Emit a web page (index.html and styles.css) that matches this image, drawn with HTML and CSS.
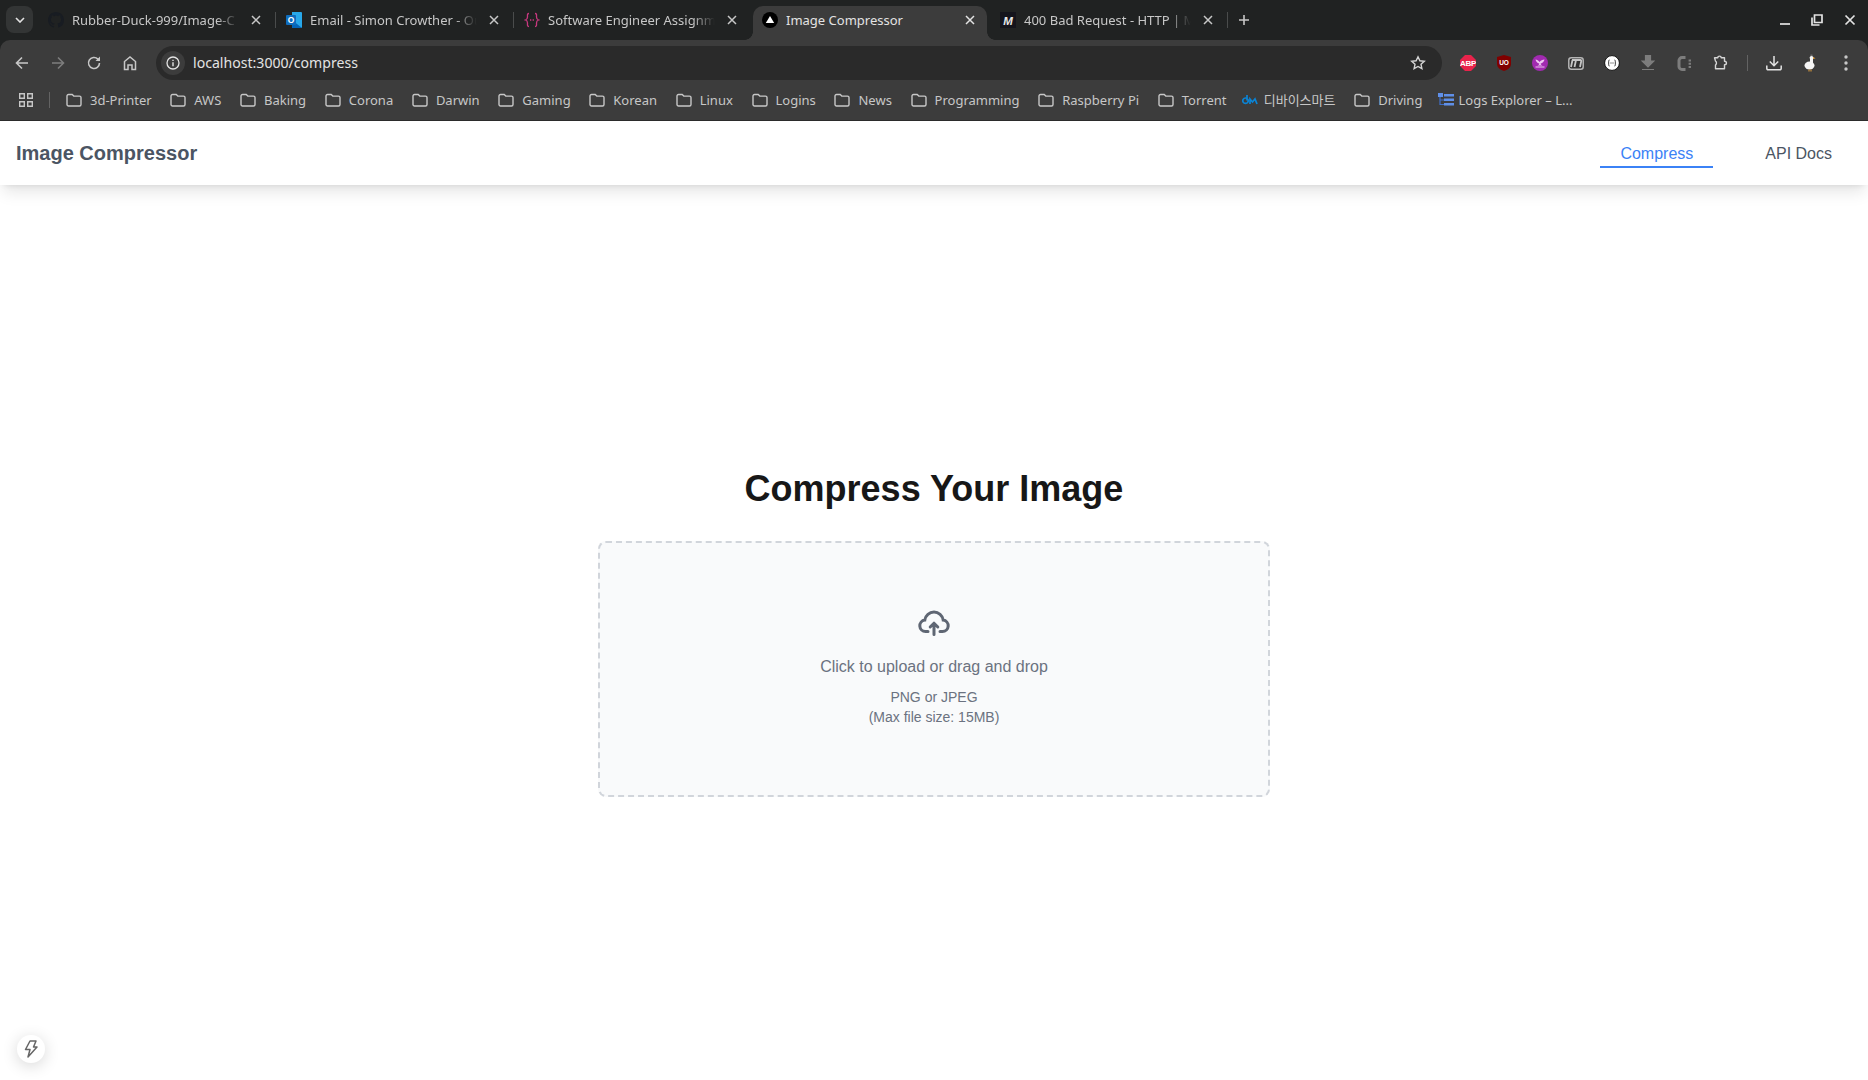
FILE: index.html
```html
<!DOCTYPE html>
<html>
<head>
    <meta charset="utf-8">
    <title>Image Compressor</title>
    <link rel="stylesheet" href="styles.css">
</head>
<body>
    <svg class="defs" width="0" height="0">
        <symbol id="folder" viewBox="0 0 16 14">
            <path d="M1 3a1.500 1.500 0 0 1 1.500-1.500h3.700l1.600 1.600h5.700A1.500 1.500 0 0 1 15 4.600v6.900A1.500 1.500 0 0 1 13.500 13h-11A1.500 1.500 0 0 1 1 11.500z" fill="none" stroke="#c7c7c7" stroke-width="1.400"/>
        </symbol>
        <symbol id="close" viewBox="0 0 10 10">
            <path d="M1 1l8 8M9 1l-8 8" fill="none" stroke="currentColor" stroke-width="1.500"/>
        </symbol>
    </svg>

    <div class="browser">
        <div class="tabstrip">
            <div class="tab-search">
                <svg width="10" height="6" viewBox="0 0 10 6"><path d="M1 1l4 4 4-4" fill="none" stroke="#e3e3e3" stroke-width="1.600"/></svg>
            </div>

            <div class="tab">
                <svg class="favicon" viewBox="0 0 16 16"><path fill="#181c22" d="M8 0C3.580 0 0 3.580 0 8c0 3.540 2.290 6.530 5.470 7.590.4.070.55-.17.55-.38 0-.19-.01-.82-.01-1.490-2.010.37-2.530-.49-2.690-.94-.09-.23-.48-.94-.82-1.130-.28-.15-.68-.52-.01-.53.63-.01 1.080.58 1.230.82.72 1.210 1.870.87 2.330.66.07-.52.28-.87.51-1.070-1.780-.2-3.640-.89-3.640-3.950 0-.87.31-1.590.82-2.150-.08-.2-.36-1.020.08-2.120 0 0 .67-.21 2.200.82.64-.18 1.320-.27 2-.27.68 0 1.360.09 2 .27 1.530-1.040 2.200-.82 2.200-.82.44 1.100.16 1.920.08 2.120.51.56.82 1.270.82 2.150 0 3.070-1.870 3.750-3.650 3.950.29.25.54.73.54 1.480 0 1.070-.01 1.930-.01 2.200 0 .21.15.46.55.38A8.013 8.013 0 0 0 16 8c0-4.420-3.580-8-8-8z"/></svg>
                <span class="tab-title">Rubber-Duck-999/Image-C</span>
                <span class="tab-close"><svg width="10" height="10"><use href="#close"/></svg></span>
                <span class="tab-sep"></span>
            </div>

            <div class="tab">
                <svg class="favicon" viewBox="0 0 16 16">
                    <path fill="#28a8ea" d="M6 0h9a1 1 0 0 1 1 1v14a1 1 0 0 1-1 1H6z"/>
                    <path fill="#0364b8" d="M6 8l10 8H6z"/>
                    <rect x="0" y="3" width="10" height="10" rx="1" fill="#0f6cbd"/>
                    <text class="favicon-letter" x="5" y="11" font-size="8.500" fill="#fff" text-anchor="middle">O</text>
                </svg>
                <span class="tab-title">Email - Simon Crowther - Ou</span>
                <span class="tab-close"><svg width="10" height="10"><use href="#close"/></svg></span>
                <span class="tab-sep"></span>
            </div>

            <div class="tab">
                <svg class="favicon" viewBox="0 0 16 16"><path d="M5 1.500C3 1.500 3.500 3 3.500 5S3 7.500 1.500 8C3 8.500 3.500 9 3.500 11s-.5 3.500 1.500 3.500M11 1.500c2 0 1.500 1.500 1.500 3.500s.5 2.500 2 3c-1.500.5-2 1-2 3s.5 3.500-1.500 3.500" fill="none" stroke="#c8387f" stroke-width="1.300"/><path d="M6 8h4.500" stroke="#c8387f" stroke-width="1.300" stroke-dasharray="1.300 1.300"/></svg>
                <span class="tab-title">Software Engineer Assignm</span>
                <span class="tab-close"><svg width="10" height="10"><use href="#close"/></svg></span>
            </div>

            <div class="tab tab-active">
                <svg class="favicon" viewBox="0 0 16 16"><circle cx="8" cy="8" r="8" fill="#000"/><path d="M8 4l4.200 7H3.800z" fill="#fff"/></svg>
                <span class="tab-title no-fade">Image Compressor</span>
                <span class="tab-close"><svg width="10" height="10"><use href="#close"/></svg></span>
            </div>

            <div class="tab">
                <svg class="favicon" viewBox="0 0 16 16"><rect width="16" height="16" fill="#14141c"/><text class="favicon-letter italic" x="8" y="12.500" font-size="11.500" fill="#e8e8e8" text-anchor="middle">M</text></svg>
                <span class="tab-title">400 Bad Request - HTTP | M</span>
                <span class="tab-close"><svg width="10" height="10"><use href="#close"/></svg></span>
                <span class="tab-sep"></span>
            </div>

            <svg class="tab-new" width="12" height="12" viewBox="0 0 12 12"><path d="M6 1v10M1 6h10" stroke="#c7c7c7" stroke-width="1.600"/></svg>

            <div class="window-controls">
                <svg width="12" height="12" viewBox="0 0 12 12"><path d="M2 10h10" stroke="#e3e3e3" stroke-width="1.700"/></svg>
                <svg width="12" height="12" viewBox="0 0 12 12"><path d="M3.500 1h7.500v7.500H3.500z" fill="none" stroke="#e3e3e3" stroke-width="1.700"/><path d="M1 3.500V11h7.500" fill="none" stroke="#e3e3e3" stroke-width="1.700"/></svg>
                <svg width="12" height="12" viewBox="0 0 12 12"><path d="M1.500 1.500l9 9M10.500 1.500l-9 9" stroke="#e3e3e3" stroke-width="1.700"/></svg>
            </div>
        </div>

        <div class="toolbar">
            <span class="tool"><svg width="16" height="16" viewBox="0 0 16 16"><path d="M14 8H3M8 2.500L2.500 8 8 13.500" fill="none" stroke="#c7c7c7" stroke-width="1.600"/></svg></span>
            <span class="tool"><svg width="16" height="16" viewBox="0 0 16 16"><path d="M2 8h11M8 2.500L13.500 8 8 13.500" fill="none" stroke="#7d7d7d" stroke-width="1.600"/></svg></span>
            <span class="tool"><svg width="16" height="16" viewBox="0 0 16 16"><path d="M13.500 8a5.500 5.500 0 1 1-1.600-3.900L13.500 5.700" fill="none" stroke="#c7c7c7" stroke-width="1.600"/><path d="M14 1.500V6H9.500z" fill="#c7c7c7"/></svg></span>
            <span class="tool"><svg width="16" height="16" viewBox="0 0 16 16"><path d="M2.500 14.500V6.500L8 2l5.500 4.500v8h-3.500V10H6v4.500z" fill="none" stroke="#c7c7c7" stroke-width="1.500"/></svg></span>

            <div class="omnibox">
                <span class="omni-info"><svg width="14" height="14" viewBox="0 0 14 14"><circle cx="7" cy="7" r="6" fill="none" stroke="#e3e3e3" stroke-width="1.300"/><path d="M7 6.200V10.200M7 3.800v1.300" stroke="#e3e3e3" stroke-width="1.400"/></svg></span>
                <span class="omni-url">localhost:3000/compress</span>
                <svg class="omni-star" width="16" height="16" viewBox="0 0 16 16"><path d="M8 1.800l1.900 4 4.400.5-3.300 3 .9 4.400L8 11.500l-3.900 2.200.9-4.400-3.300-3 4.400-.5z" fill="none" stroke="#d5d5d5" stroke-width="1.400"/></svg>
            </div>

            <span class="tool ext-first"><svg width="16" height="16" viewBox="0 0 16 16"><path d="M5 0h6l5 5v6l-5 5H5l-5-5V5z" fill="#e8234b"/><text class="ext-text" x="8" y="11" font-size="8" letter-spacing="-.3" fill="#fff" text-anchor="middle">ABP</text></svg></span>
            <span class="tool"><svg width="16" height="16" viewBox="0 0 16 16"><path d="M8 0l7 2v7c0 3.500-3.500 6-7 7-3.500-1-7-3.500-7-7V2z" fill="#800000"/><text class="ext-text" x="8" y="10" font-size="6.500" fill="#fff" text-anchor="middle">UO</text></svg></span>
            <span class="tool"><svg width="16" height="16" viewBox="0 0 16 16"><circle cx="8" cy="8" r="8" fill="#a12ab0"/><path d="M3.500 4.500c1.500.3 3 1 4 2.500 1-1.500 3-2.200 5-2.500-.5 2-1.700 3.500-3.800 4 0 1 .5 1.500 1.800 2H5.500c1.300-.5 1.700-1 1.700-2-2-.5-3.200-2-3.700-4z" fill="#eec7f2"/><path d="M3.500 12h9" stroke="#eec7f2" stroke-width="1"/></svg></span>
            <span class="tool"><svg width="16" height="13" viewBox="0 0 16 13"><rect x=".8" y=".8" width="14.400" height="11.400" rx="2.500" fill="#2f2f2f" stroke="#b5b5b5" stroke-width="1.500"/><path d="M4 3h8.500a.8.800 0 0 1 .8 1L12 10M8 3L6.500 10M4.500 3L3 10" fill="none" stroke="#c4c4c4" stroke-width="1.800"/></svg></span>
            <span class="tool"><svg width="16" height="16" viewBox="0 0 16 16"><circle cx="8" cy="8" r="7.400" fill="#fff" stroke="#111" stroke-width="1"/><path d="M5.500 5c-1 0-.8 1-.8 2s-.2 1-.7 1c.5 0 .7 0 .7 1s-.2 2 .8 2M10.500 5c1 0 .8 1 .8 2s.2 1 .7 1c-.5 0-.7 0-.7 1s.2 2-.8 2" fill="none" stroke="#222" stroke-width=".9"/><path d="M6.500 8h3" stroke="#222" stroke-width="1" stroke-dasharray="1 1"/></svg></span>
            <span class="tool"><svg width="14" height="16" viewBox="0 0 14 16"><path d="M4.500 0h5v6H13L7 12 1 6h3.500zM1 14.500h12" fill="#7d7d7d" stroke="#7d7d7d" stroke-width="1.200"/></svg></span>
            <span class="tool"><svg width="15" height="15" viewBox="0 0 15 15"><path d="M8.500 1.600H5a3 3 0 0 0-3 3v5.800a3 3 0 0 0 3 3h3.500" fill="none" stroke="#7d7d7d" stroke-width="3"/><path d="M12.800 3.500v2M12.800 6.700v2M12.800 9.900v2" stroke="#7d7d7d" stroke-width="2.400"/></svg></span>
            <span class="tool"><svg width="16" height="16" viewBox="-1 0 16 16"><path d="M1.500 2.800h3.300c0-2.200 3.400-2.200 3.400 0h3.300v3.400c2.600 0 2.600 3.600 0 3.600v4H2.500V10C3.800 9 3.800 7 2.500 6z" fill="none" stroke="#d5d5d5" stroke-width="1.400" stroke-linejoin="round"/></svg></span>
            <span class="toolbar-sep"></span>
            <span class="tool"><svg width="16" height="16" viewBox="0 0 16 16"><path d="M8 1v9.500M3.800 6.500L8 10.700l4.200-4.200M.8 10.500v3a1.200 1.200 0 0 0 1.200 1.200h12a1.200 1.200 0 0 0 1.200-1.200v-3" fill="none" stroke="#e3e3e3" stroke-width="1.500"/></svg></span>
            <span class="tool"><svg width="12" height="18" viewBox="0 0 12 18"><ellipse cx="5.500" cy="11.500" rx="5" ry="4" fill="#f5f5f5"/><path d="M6 4h3v7H6z" fill="#f5f5f5"/><circle cx="7.500" cy="3.800" r="1.900" fill="#f5f5f5"/><path d="M9 3l2.500 1.200L9 5z" fill="#e8a33d"/><path d="M5 15.500v2M7 15.500v2" stroke="#e8a33d" stroke-width="1"/><path d="M6.500 1.200h2" stroke="#8a8a8a" stroke-width="1"/></svg></span>
            <span class="tool"><svg width="4" height="16" viewBox="0 0 4 16"><circle cx="2" cy="2" r="1.700" fill="#c7c7c7"/><circle cx="2" cy="8" r="1.700" fill="#c7c7c7"/><circle cx="2" cy="14" r="1.700" fill="#c7c7c7"/></svg></span>
        </div>

        <div class="bookmarks">
            <svg class="apps" width="14" height="14" viewBox="0 0 14 14"><path d="M.7.700h4.600v4.600H.7zM8.700.700h4.600v4.600H8.700zM.7 8.700h4.600v4.600H.7zM8.700 8.700h4.600v4.600H8.700z" fill="none" stroke="#c7c7c7" stroke-width="1.400"/></svg>
            <span class="bookmarks-sep"></span>
            <span class="bm"><svg width="16" height="14"><use href="#folder"/></svg>3d-Printer</span>
            <span class="bm"><svg width="16" height="14"><use href="#folder"/></svg>AWS</span>
            <span class="bm"><svg width="16" height="14"><use href="#folder"/></svg>Baking</span>
            <span class="bm"><svg width="16" height="14"><use href="#folder"/></svg>Corona</span>
            <span class="bm"><svg width="16" height="14"><use href="#folder"/></svg>Darwin</span>
            <span class="bm"><svg width="16" height="14"><use href="#folder"/></svg>Gaming</span>
            <span class="bm"><svg width="16" height="14"><use href="#folder"/></svg>Korean</span>
            <span class="bm"><svg width="16" height="14"><use href="#folder"/></svg>Linux</span>
            <span class="bm"><svg width="16" height="14"><use href="#folder"/></svg>Logins</span>
            <span class="bm"><svg width="16" height="14"><use href="#folder"/></svg>News</span>
            <span class="bm"><svg width="16" height="14"><use href="#folder"/></svg>Programming</span>
            <span class="bm"><svg width="16" height="14"><use href="#folder"/></svg>Raspberry Pi</span>
            <span class="bm"><svg width="16" height="14"><use href="#folder"/></svg>Torrent</span>
            <span class="bm bm-site"><svg width="16" height="12" viewBox="0 0 16 12"><path d="M3.500 4a2.700 2.700 0 1 0 .01 0zM5 1v5.500M8 10V5l2.500 3L13 5l2 5" fill="none" stroke="#0a84d6" stroke-width="1.700"/></svg>디바이스마트</span>
            <span class="bm"><svg width="16" height="14"><use href="#folder"/></svg>Driving</span>
            <span class="bm bm-site bm-logs"><svg width="16" height="14" viewBox="0 0 16 14"><path d="M0 0h5v4H0zM6 1h10v2.500H6zM6 5.500h10V8H6zM6 10h10v2.500H6z" fill="#5f8fe8"/><path d="M2 4v7.500h4M2 7h4" fill="none" stroke="#3f6fc8" stroke-width="1.200"/></svg>Logs Explorer – L...</span>
        </div>
    </div>

    <header class="navbar">
        <span class="logo">Image Compressor</span>
        <nav class="nav-links">
            <a class="nav-link nav-active">Compress</a>
            <a class="nav-link">API Docs</a>
        </nav>
    </header>

    <main class="main">
        <h1>Compress Your Image</h1>
        <div class="dropzone">
            <svg class="upload-icon" width="32" height="26" viewBox="0 0 32 26">
                <path d="M10 21.500H7.500a5.750 5.750 0 0 1-.7-11.450 9.300 9.300 0 0 1 18.400 0 5.750 5.750 0 0 1-.7 11.450H22" fill="none" stroke="#5f6673" stroke-width="3" stroke-linecap="round"/>
                <path d="M16 24.500V13.500M12.200 17L16 13.200 19.800 17" fill="none" stroke="#5f6673" stroke-width="3" stroke-linecap="round" stroke-linejoin="round"/>
            </svg>
            <p class="drop-main">Click to upload or drag and drop</p>
            <p class="drop-sub">PNG or JPEG<br>(Max file size: 15MB)</p>
        </div>
    </main>

    <div class="dev-badge">
        <svg width="14" height="18" viewBox="0 0 14 18"><path d="M6 1h6L9.500 7H13L4 17l2-7.500H1.500z" fill="none" stroke="#666" stroke-width="1.500" stroke-linejoin="round"/></svg>
    </div>
</body>
</html>
```

FILE: styles.css
```css
html, body {
    height: 100%;
}

body {
    margin: 0;
    display: flex;
    flex-direction: column;
    overflow: hidden;
    background-color: #fff;
    font-family: "Liberation Sans", Arial, sans-serif;
}

.defs {
    position: absolute;
}

.browser {
    flex: none;
    background-color: #202222;
}

/* tabs row */
.tabstrip {
    display: flex;
    align-items: flex-end;
    height: 40px;
    font-family: "Noto Sans", sans-serif;
    font-size: 13px;
    color: #c7c7c7;
}

.tab-search {
    display: flex;
    align-items: center;
    justify-content: center;
    align-self: flex-start;
    width: 27px;
    height: 27px;
    margin: 6px 6px 0;
    border-radius: 8px;
    background-color: #333535;
}

.tab {
    position: relative;
    display: flex;
    align-items: center;
    flex: none;
    box-sizing: border-box;
    width: 238px;
    height: 34px;
    padding: 0 0 6px 9px;
}

.tab-active {
    width: 234px;
    margin-right: 4px;
    border-radius: 10px 10px 0 0;
    background-color: #3c3c3c;
    color: #e3e3e3;
}

.tab-active::before,
.tab-active::after {
    content: "";
    position: absolute;
    bottom: 0;
    width: 8px;
    height: 8px;
}

.tab-active::before {
    left: -8px;
    background: radial-gradient(circle at 0 0, transparent 7.500px, #3c3c3c 8px);
}

.tab-active::after {
    right: -8px;
    background: radial-gradient(circle at 100% 0, transparent 7.500px, #3c3c3c 8px);
}

.favicon {
    flex: none;
    width: 16px;
    height: 16px;
    margin-right: 8px;
}

.favicon-letter {
    font-family: "Liberation Sans", sans-serif;
    font-weight: bold;
}

.italic {
    font-style: italic;
}

.tab-title {
    flex: none;
    width: 172px;
    overflow: hidden;
    white-space: nowrap;
    -webkit-mask-image: linear-gradient(to right, #000 84%, transparent 97%);
    mask-image: linear-gradient(to right, #000 84%, transparent 97%);
}

.no-fade {
    -webkit-mask-image: none;
    mask-image: none;
}

.tab-close {
    display: flex;
    align-items: center;
    justify-content: center;
    flex: none;
    width: 36px;
    margin-left: -6px;
}

.tab-sep {
    flex: none;
    width: 1px;
    height: 16px;
    margin-left: 1px;
    background-color: #4a4c4c;
}

.tab-new {
    align-self: flex-start;
    margin: 14px 0 0 9px;
}

.window-controls {
    display: flex;
    align-self: flex-start;
    gap: 21px;
    margin: 14px 12px 0 auto;
}

/* address row */
.toolbar {
    display: flex;
    align-items: center;
    box-sizing: border-box;
    height: 40px;
    padding: 6px 4px 0;
    border-radius: 10px 10px 0 0;
    background-color: #3c3c3c;
}

.tool {
    display: flex;
    align-items: center;
    justify-content: center;
    flex: none;
    width: 36px;
    height: 34px;
}

.omnibox {
    display: flex;
    align-items: center;
    flex: 1;
    height: 34px;
    margin-left: 8px;
    padding-left: 5px;
    border-radius: 17px;
    background-color: #2a2a2a;
}

.omni-info {
    display: flex;
    align-items: center;
    justify-content: center;
    width: 24px;
    height: 24px;
    border-radius: 50%;
    background-color: #3c3c3c;
}

.omni-url {
    margin-left: 8px;
    padding-bottom: 2px;
    font-family: "Noto Sans", sans-serif;
    font-size: 14.100px;
    color: #e3e3e3;
}

.omni-star {
    margin-left: auto;
    margin-right: 16px;
}

.ext-first {
    margin-left: 8px;
}

.ext-text {
    font-family: "Liberation Sans", sans-serif;
    font-weight: bold;
}

.toolbar-sep {
    flex: none;
    width: 1px;
    height: 16px;
    margin: 0 8px 0 9px;
    background-color: #636363;
}

/* bookmarks row */
.bookmarks {
    display: flex;
    align-items: center;
    box-sizing: border-box;
    height: 41px;
    padding: 0 0 1px 19px;
    border-bottom: 1px solid #2c2c2c;
    background-color: #3c3c3c;
    font-family: "Noto Sans", "Noto Sans CJK KR", sans-serif;
    font-size: 13px;
    color: #c7c7c7;
}

.bookmarks-sep {
    flex: none;
    width: 1px;
    height: 16px;
    margin: 0 16px;
    background-color: #636363;
}

.bm {
    display: flex;
    align-items: center;
    flex: none;
    gap: 8px;
    margin-right: 18.700px;
}

.bm-site {
    gap: 6px;
    margin-left: -3.500px;
}

.bm-logs {
    gap: 5px;
}

/* app */
.navbar {
    display: flex;
    align-items: center;
    justify-content: space-between;
    flex: none;
    box-sizing: border-box;
    height: 64px;
    padding: 0 16px;
    background-color: #fff;
    box-shadow: 0 10px 15px -3px rgba(0, 0, 0, 0.1), 0 4px 6px -4px rgba(0, 0, 0, 0.1);
}

.logo {
    font-size: 20px;
    font-weight: bold;
    color: #4b5563;
}

.nav-links {
    display: flex;
    gap: 32px;
}

.nav-link {
    padding: 2px 20px 0;
    border-top: 2px solid transparent;
    border-bottom: 2px solid transparent;
    font-size: 16px;
    line-height: 24px;
    color: #4b5563;
}

.nav-active {
    border-bottom-color: #3b82f6;
    color: #3b82f6;
}

.main {
    display: flex;
    flex-direction: column;
    align-items: center;
    justify-content: center;
    flex: 1;
}

h1 {
    margin: 0 0 32px;
    font-size: 36px;
    line-height: 40px;
    font-weight: bold;
    color: #171717;
}

.dropzone {
    display: flex;
    flex-direction: column;
    align-items: center;
    justify-content: center;
    box-sizing: border-box;
    width: 672px;
    height: 256px;
    border: 2px dashed #d1d5db;
    border-radius: 8px;
    background-color: #f9fafb;
    color: #6b7280;
    text-align: center;
}

.upload-icon {
    margin-bottom: 19px;
}

.drop-main {
    margin: 0 0 8px;
    font-size: 16px;
    line-height: 24px;
}

.drop-sub {
    margin: 0;
    font-size: 14px;
    line-height: 20px;
}

.dev-badge {
    position: fixed;
    left: 17px;
    bottom: 17px;
    display: flex;
    align-items: center;
    justify-content: center;
    width: 28px;
    height: 28px;
    border-radius: 50%;
    background-color: #fff;
    box-shadow: 0 3px 16px rgba(0, 0, 0, 0.16);
}
```
